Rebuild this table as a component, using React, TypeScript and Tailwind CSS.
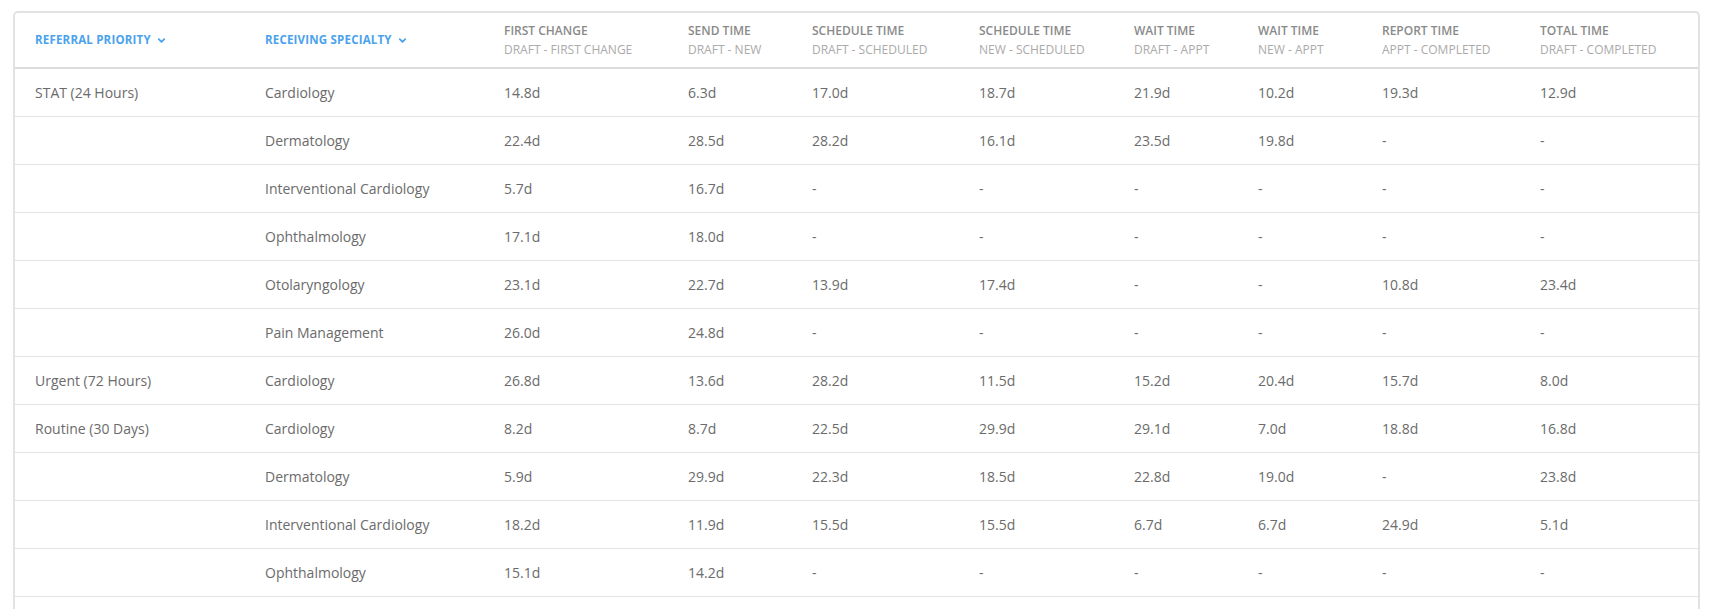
import { ChevronDown } from "lucide-react"

type Row = {
    priority: string
    specialty: string
    values: string[]
}

const columns = [
    { title: "FIRST CHANGE", sub: "DRAFT - FIRST CHANGE" },
    { title: "SEND TIME", sub: "DRAFT - NEW" },
    { title: "SCHEDULE TIME", sub: "DRAFT - SCHEDULED" },
    { title: "SCHEDULE TIME", sub: "NEW - SCHEDULED" },
    { title: "WAIT TIME", sub: "DRAFT - APPT" },
    { title: "WAIT TIME", sub: "NEW - APPT" },
    { title: "REPORT TIME", sub: "APPT - COMPLETED" },
    { title: "TOTAL TIME", sub: "DRAFT - COMPLETED" },
]

const rows: Row[] = [
    { priority: "STAT (24 Hours)", specialty: "Cardiology", values: ["14.8d", "6.3d", "17.0d", "18.7d", "21.9d", "10.2d", "19.3d", "12.9d"] },
    { priority: "", specialty: "Dermatology", values: ["22.4d", "28.5d", "28.2d", "16.1d", "23.5d", "19.8d", "-", "-"] },
    { priority: "", specialty: "Interventional Cardiology", values: ["5.7d", "16.7d", "-", "-", "-", "-", "-", "-"] },
    { priority: "", specialty: "Ophthalmology", values: ["17.1d", "18.0d", "-", "-", "-", "-", "-", "-"] },
    { priority: "", specialty: "Otolaryngology", values: ["23.1d", "22.7d", "13.9d", "17.4d", "-", "-", "10.8d", "23.4d"] },
    { priority: "", specialty: "Pain Management", values: ["26.0d", "24.8d", "-", "-", "-", "-", "-", "-"] },
    { priority: "Urgent (72 Hours)", specialty: "Cardiology", values: ["26.8d", "13.6d", "28.2d", "11.5d", "15.2d", "20.4d", "15.7d", "8.0d"] },
    { priority: "Routine (30 Days)", specialty: "Cardiology", values: ["8.2d", "8.7d", "22.5d", "29.9d", "29.1d", "7.0d", "18.8d", "16.8d"] },
    { priority: "", specialty: "Dermatology", values: ["5.9d", "29.9d", "22.3d", "18.5d", "22.8d", "19.0d", "-", "23.8d"] },
    { priority: "", specialty: "Interventional Cardiology", values: ["18.2d", "11.9d", "15.5d", "15.5d", "6.7d", "6.7d", "24.9d", "5.1d"] },
    { priority: "", specialty: "Ophthalmology", values: ["15.1d", "14.2d", "-", "-", "-", "-", "-", "-"] },
]

const grid = "grid grid-cols-[230px_239px_184px_124px_167px_155px_124px_124px_158px_1fr]"

const SortHeader = ({ label }: { label: string }) => (
    <div className="pl-[20px] flex items-center gap-[5px] text-[11.5px] font-bold text-[#4aa3ec] tracking-[0.2px]">
        {label} <ChevronDown size={11} strokeWidth={4} />
    </div>
)

const App = () => {
    return (
        <div className="h-[609px] overflow-hidden bg-white pt-[11px] pl-[13px] pr-[14px]" style={{ fontFamily: '"Open Sans", sans-serif' }}>
            <div className="border-2 border-b-0 border-[#e2e2e2] rounded-t-[5px]">
                <div className={`${grid} h-[56px] items-center border-b-2 border-[#dcdcdc]`}>
                    <SortHeader label="REFERRAL PRIORITY" />
                    <SortHeader label="RECEIVING SPECIALTY" />
                    {columns.map((c, i) => (
                        <div key={i} className="pl-[20px] flex flex-col leading-[19px]">
                            <span className="text-[12px] font-semibold text-[#8a8a8a]">{c.title}</span>
                            <span className="text-[12px] text-[#aaaaaa]">{c.sub}</span>
                        </div>
                    ))}
                </div>
                {rows.map((r, i) => (
                    <div key={i} className={`${grid} h-[48px] items-center border-b border-[#e3e3e3] text-[14px] text-[#6b6b6b]`}>
                        <div className="pl-[20px]">{r.priority}</div>
                        <div className="pl-[20px]">{r.specialty}</div>
                        {r.values.map((v, j) => (
                            <div key={j} className="pl-[20px]">{v}</div>
                        ))}
                    </div>
                ))}
                {/* next row starts below the fold */}
                <div className="h-[48px]" />
            </div>
        </div>
    )
}

export default App
